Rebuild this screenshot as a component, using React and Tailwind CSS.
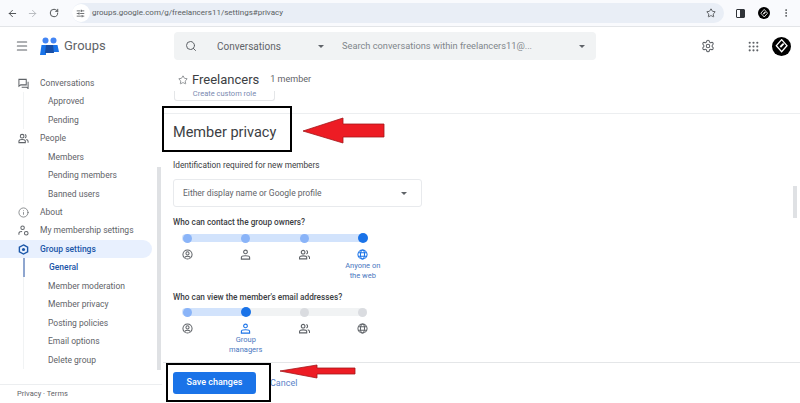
import { ArrowLeft, ArrowRight, RotateCw, SlidersHorizontal, Star, EllipsisVertical, Menu, Search, Settings, Grip, Info } from "lucide-react";

const font = "font-['Roboto','Liberation_Sans',sans-serif]";

function Diamond({ size }) {
  return (
    <div className="flex items-center justify-center rounded-full bg-black" style={{ width: size, height: size }}>
      <svg viewBox="0 0 20 20" width={size * 0.7} height={size * 0.7}>
        <path d="M10 1 L18 10 L10 19 L2 10 Z" fill="none" stroke="#fff" strokeWidth="2" />
        <path d="M12 6 L7 11 L9 13 L14 8 Z" fill="#fff" />
      </svg>
    </div>
  );
}

function Caret({ className }) {
  return <div className={`h-0 w-0 border-x-[3.5px] border-t-[3.5px] border-x-transparent border-t-[#5f6368] ${className || ""}`}></div>;
}

// small material style icons, lucide has no close match for these
function ForumIcon({ size = 12 }) {
  return (
    <svg viewBox="0 0 12 12" width={size} height={size} fill="none" stroke="currentColor" strokeWidth="1.1">
      <path d="M1 1.5h8v6H3L1 9z" />
      <path d="M11 4v7.5L9.5 10H4" />
    </svg>
  );
}

function PeopleIcon({ size = 12 }) {
  return (
    <svg viewBox="0 0 12 12" width={size} height={size} fill="none" stroke="currentColor" strokeWidth="1.1">
      <circle cx="4.5" cy="3.5" r="2" />
      <path d="M1 10.5V9c0-1.2 1.6-2 3.5-2S8 7.8 8 9v1.5z" />
      <path d="M7.5 1.6a2 2 0 0 1 0 3.8M9 7.2c1.2.3 2 1 2 1.8v1.5" />
    </svg>
  );
}

function MemberSettingsIcon({ size = 12 }) {
  return (
    <svg viewBox="0 0 12 12" width={size} height={size} fill="none" stroke="currentColor" strokeWidth="1.1">
      <circle cx="5" cy="3" r="1.9" />
      <path d="M1 10.5V9c0-1.2 1.5-2 3.5-2" />
      <circle cx="9" cy="9" r="2" />
    </svg>
  );
}

function ProfileIcon({ size = 12 }) {
  return (
    <svg viewBox="0 0 12 12" width={size} height={size} fill="none" stroke="currentColor" strokeWidth="1.1">
      <circle cx="6" cy="6" r="5" />
      <circle cx="6" cy="4.8" r="1.7" />
      <path d="M3 9.2c.8-1 1.8-1.4 3-1.4s2.2.4 3 1.4" />
    </svg>
  );
}

function ManagerIcon({ size = 12 }) {
  return (
    <svg viewBox="0 0 12 12" width={size} height={size} fill="none" stroke="currentColor" strokeWidth="1.2">
      <circle cx="6" cy="3.2" r="2" />
      <path d="M1.5 11V9.2C1.5 8 3.5 7.4 6 7.4s4.5.6 4.5 1.8V11z" />
    </svg>
  );
}

function GroupIcon({ size = 12 }) {
  return (
    <svg viewBox="0 0 12 12" width={size} height={size} fill="none" stroke="currentColor" strokeWidth="1.2">
      <circle cx="4.5" cy="3.5" r="2" />
      <path d="M.6 10.8V9.4c0-1.2 1.8-1.9 3.9-1.9s3.9.7 3.9 1.9v1.4z" />
      <path d="M8 1.6a2 2 0 0 1 0 3.8M9.5 7.4c1.2.3 2 1 2 2v1.4" />
    </svg>
  );
}

function GlobeIcon({ size = 12 }) {
  return (
    <svg viewBox="0 0 12 12" width={size} height={size} fill="none" stroke="currentColor" strokeWidth="1.1">
      <circle cx="6" cy="6" r="5" />
      <ellipse cx="6" cy="6" rx="2.2" ry="5" />
      <path d="M1.5 4h9M1.5 8h9" />
    </svg>
  );
}

function GroupSettingsIcon({ size = 12 }) {
  return (
    <svg viewBox="0 0 12 12" width={size} height={size} fill="none" stroke="currentColor" strokeWidth="1.5">
      <path d="M6 1 L10.5 3.5 V8.5 L6 11 L1.5 8.5 V3.5 Z" />
      <circle cx="6" cy="6" r="1.7" fill="currentColor" stroke="none" />
    </svg>
  );
}

function InfoIcon({ size = 12 }) {
  return <Info size={size} strokeWidth={1.5} />;
}

function BrowserBar() {
  return (
    <div className="flex h-[27px] items-center border-b border-[#e3e5e8] bg-[#f9fafd] pr-[9px] pl-[8px] text-[#44474a]">
      <ArrowLeft size={11} strokeWidth={2} className="ml-[-1px]" />
      <ArrowRight size={11} strokeWidth={2} className="ml-[9px] text-[#b4b7bb]" />
      <RotateCw size={10} strokeWidth={2.2} className="ml-[11px]" />
      <div className="ml-[13px] flex h-[20px] w-[654px] items-center rounded-full bg-[#e9eef6]">
        <div className="flex h-[18px] w-[18px] items-center justify-center rounded-full bg-white">
          <SlidersHorizontal size={9} strokeWidth={2} />
        </div>
        <span className="ml-[2px] flex-1 text-[8px] text-[#5a5e63]">groups.google.com/g/freelancers11/settings#privacy</span>
        <Star size={10} strokeWidth={2} className="mr-[8px]" />
      </div>
      <div className="ml-[12px] flex h-[9px] w-[9px] rounded-[1px] border border-[#303338]">
        <div className="ml-auto h-full w-[4px] bg-[#303338]"></div>
      </div>
      <div className="ml-[13px]"><Diamond size={12} /></div>
      <EllipsisVertical size={10} className="ml-[11px]" />
    </div>
  );
}

function GroupsLogo() {
  return (
    <svg viewBox="0 0 19 18" width="19" height="18">
      <circle cx="5.5" cy="3.5" r="3" fill="#4285f4" />
      <circle cx="13.5" cy="3.5" r="3" fill="#4285f4" />
      <path d="M1.5 8 H6 L6 18 H0 Z" fill="#1a73e8" />
      <path d="M13 8 H17.5 L19 15 H13 Z" fill="#1a73e8" />
      <path d="M6 8 H13 L14 16 H5 Z" fill="#174ea6" />
    </svg>
  );
}

function TopBar() {
  return (
    <div className="flex h-[43px] items-center bg-white pb-[5px]">
      <Menu size={14} strokeWidth={1.8} className="ml-[15px] text-[#5f6368]" />
      <div className="ml-[11px]"><GroupsLogo /></div>
      <span className="ml-[5px] w-[110px] text-[13px] text-[#5f6368]">Groups</span>
      <div className="flex h-[28px] w-[422px] items-center rounded-[4px] bg-[#f1f3f4] text-[10px] text-[#5f6368]">
        <Search size={12} strokeWidth={2} className="ml-[11px]" />
        <span className="ml-[20px] w-[101px]">Conversations</span>
        <Caret />
        <span className="ml-[18px] w-[237px] text-[9.25px] text-[#80868b]">Search conversations within freelancers11@...</span>
        <Caret />
      </div>
      <Settings size={14} strokeWidth={1.8} className="ml-[105px] text-[#5f6368]" />
      <Grip size={13} strokeWidth={2} className="ml-[32px] text-[#5f6368]" />
      <div className="ml-[12px]"><Diamond size={19} /></div>
    </div>
  );
}

function NavTop({ icon: Icon, label, active }) {
  return (
    <div className={`flex h-[18.4px] items-center rounded-r-full pl-[18px] text-[8.5px] ${active ? "w-[152px] bg-[#e8f0fe] font-medium text-[#1a56a8]" : "text-[#5f6368]"}`}>
      <Icon size={11} />
      <span className="ml-[11px]">{label}</span>
    </div>
  );
}

function NavSub({ label, active }) {
  return (
    <div className={`flex h-[18.5px] items-center pl-[24px] text-[8.5px] ${active ? "font-medium text-[#1a56a8]" : "text-[#5f6368]"}`}>{label}</div>
  );
}

function SubList({ children }) {
  return <div className="ml-[23px] border-l border-[#f1f3f4]">{children}</div>;
}

function Sidebar() {
  return (
    <div className={`relative flex w-[162px] shrink-0 flex-col pt-[4px] ${font}`}>
      <div className="flex-1">
        <NavTop icon={ForumIcon} label="Conversations" />
        <SubList>
          <NavSub label="Approved" />
          <NavSub label="Pending" />
        </SubList>
        <NavTop icon={PeopleIcon} label="People" />
        <SubList>
          <NavSub label="Members" />
          <NavSub label="Pending members" />
          <NavSub label="Banned users" />
        </SubList>
        <NavTop icon={InfoIcon} label="About" />
        <NavTop icon={MemberSettingsIcon} label="My membership settings" />
        <NavTop icon={GroupSettingsIcon} label="Group settings" active />
        <SubList>
          <div className="-ml-[1px] border-l-2 border-[#8fa6cf]"><NavSub label="General" active /></div>
          <NavSub label="Member moderation" />
          <NavSub label="Member privacy" />
          <NavSub label="Posting policies" />
          <NavSub label="Email options" />
          <NavSub label="Delete group" />
        </SubList>
      </div>
      <div className="flex h-[19px] items-center border-t border-[#eceef0] pl-[17px] text-[7.5px] text-[#5f6368]">Privacy · Terms</div>
      <div className="absolute top-[97px] left-[157px] h-[203px] w-[4px] bg-[#dfe1e4]"></div>
    </div>
  );
}

function Slider({ selected, filled, labels }) {
  const icons = [ProfileIcon, ManagerIcon, GroupIcon, GlobeIcon];
  return (
    <div>
      <div className="relative ml-[-15px] grid h-[10px] w-[234px] grid-cols-4">
        <div className="absolute top-[1px] left-[24px] h-[8px] w-[185px] rounded-full bg-[#f1f3f4]"></div>
        <div className="absolute top-[1px] left-[24px] h-[8px] rounded-full bg-[#d2e3fc]" style={{ width: filled }}></div>
        {icons.map((_, i) => (
          <div key={i} className="relative flex items-center justify-center">
            {i === selected ? (
              <div className="h-[10px] w-[10px] rounded-full bg-[#1a73e8]"></div>
            ) : i < selected ? (
              <div className="h-[9px] w-[9px] rounded-full bg-[#8ab4f8]"></div>
            ) : (
              <div className="h-[9px] w-[9px] rounded-full bg-[#dadce0]"></div>
            )}
          </div>
        ))}
      </div>
      <div className="ml-[-15px] mt-[6px] grid w-[234px] grid-cols-4">
        {icons.map((Icon, i) => (
          <div key={i} className={`flex flex-col items-center ${i === selected ? "text-[#1a73e8]" : "text-[#5f6368]"}`}>
            <Icon size={11} />
            {i === selected && (
              <div className="mt-[1px] w-[44px] text-center text-[7.5px] leading-[9.5px] text-[#4a78c0]">{labels}</div>
            )}
          </div>
        ))}
      </div>
    </div>
  );
}

function Main() {
  return (
    <div className={`relative flex-1 ${font}`}>
      <div className="flex h-[21px] items-center pb-[1px] pl-[16px]">
        <Star size={10} strokeWidth={1.6} className="text-[#5f6368]" />
        <span className="ml-[4px] text-[13px] text-[#3c4043]">Freelancers</span>
        <span className="ml-[11px] text-[9px] text-[#5f6368]">1 member</span>
      </div>
      <div className="ml-[12px] h-[10px] w-[101px] overflow-hidden rounded-b-[3px] border-x border-b border-[#e4e6e8] text-center">
        <div className="-mt-[2px] text-[7.5px] leading-[10px] text-[#7a8ab0]">Create custom role</div>
      </div>
      <div className="mt-[12px] border-t border-[#eceef0] pl-[11px]">
        <div className="mt-[9px] text-[14.5px] leading-[20px] text-[#3c4043]">Member privacy</div>
        <div className="mt-[16px] text-[8.25px] leading-[12px] text-[#3c4043]">Identification required for new members</div>
        <div className="mt-[8px] flex h-[28px] w-[249px] items-center justify-between rounded-[3px] border border-[#e8eaed] pr-[14px] pl-[9px] text-[8.5px] text-[#5f6368]">
          <span>Either display name or Google profile</span>
          <Caret />
        </div>
        <div className="mt-[9px] text-[8.25px] leading-[12px] font-medium text-[#3c4043]">Who can contact the group owners?</div>
        <div className="mt-[5px]">
          <Slider selected={3} filled="185px" labels="Anyone on the web" />
        </div>
        <div className="mt-[11px] text-[8.25px] leading-[12px] font-medium text-[#3c4043]">Who can view the member's email addresses?</div>
        <div className="mt-[4px]">
          <Slider selected={1} filled="63px" labels="Group managers" />
        </div>
      </div>
      <div className="mt-[8px] ml-[1px] border-t border-[#e4e6e8] pt-[9px] pl-[10px]">
        <div className="flex items-center">
          <div className="flex h-[22px] w-[83px] items-center justify-center rounded-[3px] bg-[#1a73e8] text-[9px] font-medium text-white">Save changes</div>
          <span className="mt-[1px] ml-[14px] text-[9px] text-[#5a82c8]">Cancel</span>
        </div>
      </div>
      <div className="absolute top-[116px] left-[631px] h-[32px] w-[4px] bg-[#dfe1e4]"></div>
    </div>
  );
}

function Arrow({ className, width, height, points }) {
  return (
    <svg viewBox={`0 0 ${width} ${height}`} width={width} height={height} className={`absolute ${className}`}>
      <polygon points={points} fill="#ed1c24" stroke="#a3161b" strokeWidth="0.8" />
    </svg>
  );
}

export default function App() {
  return (
    <div className={`relative h-[403px] w-[800px] overflow-hidden bg-white ${font}`}>
      <BrowserBar />
      <TopBar />
      <div className="flex h-[333px]">
        <Sidebar />
        <Main />
      </div>

      {/* annotations drawn on top of the screenshot */}
      <div className="absolute top-[106px] left-[162px] h-[46px] w-[130px] border-2 border-black"></div>
      <div className="absolute top-[363px] left-[166px] h-[39px] w-[105px] border-2 border-black"></div>
      <Arrow className="top-[117px] left-[302px]" width={83} height={27} points="1,14 41,1 41,7 82,7 82,20 41,20 41,26" />
      <Arrow className="top-[364px] left-[279px]" width={77} height={15} points="1,7 38,1 38,4 76,4 76,10 38,10 38,14" />
    </div>
  );
}
